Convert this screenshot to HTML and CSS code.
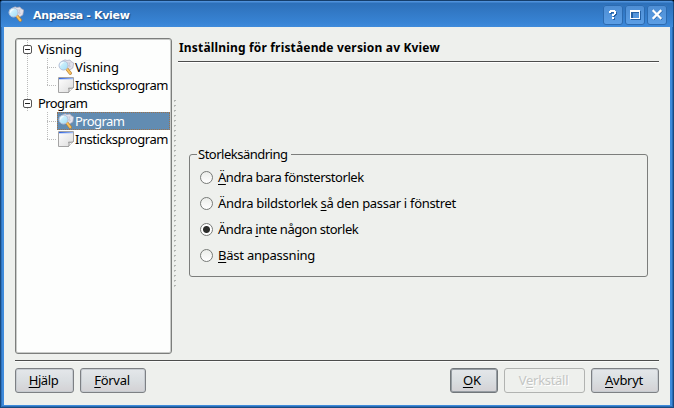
FILE: index.html
```html
<!DOCTYPE html>
<html lang="sv">
<head>
<meta charset="utf-8">
<title>Anpassa - Kview</title>
<link rel="stylesheet" href="styles.css">
</head>
<body>
<svg class="defs" width="0" height="0">
  <defs>
    <linearGradient id="lens" x1="0" y1="0" x2="1" y2="1"><stop offset="0" stop-color="#e4f8ff"/><stop offset="1" stop-color="#9cdcf6"/></linearGradient>
    <linearGradient id="bar" x1="0" y1="0" x2="1" y2="0"><stop offset="0" stop-color="#2f62e0"/><stop offset="1" stop-color="#9dbcf8"/></linearGradient>
    <linearGradient id="paper" x1="0" y1="0" x2="1" y2="1"><stop offset="0" stop-color="#ffffff"/><stop offset="1" stop-color="#dcdcdc"/></linearGradient>
  </defs>
  <symbol id="view" viewBox="0 0 16 16">
    <path d="M4 2.500L7 .8l2 .7 3-.5 1 1.500 2.700 1.500L14.800 9 11.500 11 7 9z" fill="#e2e2ec" stroke="#a8a8ba" stroke-width=".7"/>
    <path d="M9 3.500l3 1M10 6.500l3 1M12 3l-1 6" stroke="#c4c5d3" stroke-width=".7"/>
    <path d="M9 10l3.300 4.200" stroke="#b98239" stroke-width="3.200" stroke-linecap="round"/>
    <path d="M9 10l3.100 4.100" stroke="#f9c45e" stroke-width="2" stroke-linecap="round"/>
    <circle cx="5.500" cy="6.500" r="4.500" fill="url(#lens)" stroke="#b5bfd8"/>
    <path d="M2.500 6.500a3 3 0 0 1 3-3" stroke="#fff" fill="none"/>
  </symbol>
  <symbol id="page" viewBox="0 0 16 16">
    <path d="M.5.5h15v10l-5 5H.5z" fill="url(#paper)" stroke="#a4a4a4"/>
    <path d="M1 1h14v1.300H1z" fill="url(#bar)"/>
    <path d="M10.500 15.500c.8-1.500.7-3 .2-4.500 1.500.5 3.300.4 4.800-.5" fill="#f6f6f6" stroke="#858585" stroke-width=".9"/>
  </symbol>
</svg>
<div class="window">
  <header class="titlebar">
    <svg class="app-icon"><use href="#view"/></svg>
    <h1 class="title">Anpassa - Kview</h1>
    <div class="controls">
      <span class="control"><svg width="20" height="20" viewBox="0 0 20 20" shape-rendering="crispEdges"><path class="shade" d="M7 7h2v2H7zM8 6h5v2H8zM12 7h2v3h-2zM10 10h3v1h-3zM10 11h2v1h-2zM10 13h2v2h-2z"/><path class="glyph" d="M6 6h2v2H6zM7 5h5v2H7zM11 6h2v3h-2zM9 9h3v1H9zM9 10h2v1H9zM9 12h2v2H9z"/></svg></span>
      <span class="control"><svg width="20" height="20" viewBox="0 0 20 20" shape-rendering="crispEdges"><path class="shade" d="M6 6h10v9H6zM8 8v5h6V8z" fill-rule="evenodd"/><path class="glyph" d="M5 5h10v9H5zM6 7v6h8V7z" fill-rule="evenodd"/></svg></span>
      <span class="control"><svg width="20" height="20" viewBox="0 0 20 20"><path d="M7 6.500l7 7M14 6.500l-7 7" stroke="#2561a5" stroke-width="2.400" stroke-linecap="square"/><path d="M6.500 6l7 7M13.500 6l-7 7" stroke="#fff" stroke-width="2.300" stroke-linecap="square"/></svg></span>
    </div>
  </header>
  <main class="client">
    <div class="columns">
      <nav class="tree">
        <div class="row parent"><i class="toggle"></i><span class="visning">Visning</span></div>
        <div class="row child"><svg class="icon"><use href="#view"/></svg><span class="visning">Visning</span></div>
        <div class="row child last"><svg class="icon"><use href="#page"/></svg><span class="plugins">Insticksprogram</span></div>
        <div class="row parent"><i class="toggle"></i><span class="program">Program</span></div>
        <div class="row child selected"><svg class="icon"><use href="#view"/></svg><span class="program">Program</span></div>
        <div class="row child last"><svg class="icon"><use href="#page"/></svg><span class="plugins">Insticksprogram</span></div>
      </nav>
      <div class="splitter"></div>
      <section class="page">
        <h2 class="heading">Inställning för fristående version av Kview</h2>
        <div class="group">
          <div class="legend"><span>Storleksändring</span></div>
          <div class="options">
            <label class="option only-window"><i class="radio"></i><span><u>Ä</u>ndra bara fönsterstorlek</span></label>
            <label class="option fit-image"><i class="radio"></i><span>Ändra bildstorlek <u>s</u>å den passar i fönstret</span></label>
            <label class="option no-resize"><i class="radio checked"></i><span>Ändra <u>i</u>nte någon storlek</span></label>
            <label class="option best-fit"><i class="radio"></i><span><u>B</u>äst anpassning</span></label>
          </div>
        </div>
      </section>
    </div>
    <footer class="buttons">
      <button class="button help"><span><u>H</u>jälp</span></button>
      <button class="button defaults"><span><u>F</u>örval</span></button>
      <button class="button ok"><span><u>O</u>K</span></button>
      <button class="button apply" disabled><span>V<u>e</u>rkställ</span></button>
      <button class="button cancel"><span><u>A</u>vbryt</span></button>
    </footer>
  </main>
</div>
</body>
</html>
```
FILE: styles.css
```css
* { box-sizing: border-box; }
body { margin: 0; background: #000; font: 13px/18px "Noto Sans", sans-serif; color: #000; }
.defs { position: absolute; }
h1, h2 { margin: 0; }
u { text-decoration: underline; text-underline-offset: 2px; text-decoration-thickness: 1px; text-decoration-skip-ink: none; }

.window { width: 674px; height: 408px; display: flex; flex-direction: column; border: 1px solid #194a80; border-top-color: #153e6b; border-radius: 3px 3px 0 0; background: #3f8bdb; padding: 0 3px 2px; overflow: hidden; box-shadow: inset 1px 0 #2f74bf, inset -1px 0 #2a6cb5, inset 0 -1px #2a6cb5; }
.titlebar { height: 26px; flex: none; display: flex; align-items: center; margin: 0 -3px; padding: 0 6px 0 7px; background: linear-gradient(#4f92dc 0, #4f92dc 1px, #2d70b9 2px, #3884d5 22px, #3f8bdb 26px); }
.app-icon { width: 16px; height: 16px; flex: none; margin-bottom: 1px; }
.title { margin-left: 9px; font: bold 11px/18px "DejaVu Sans", sans-serif; letter-spacing: -0.33px; color: #fff; text-shadow: 1px 1px 1px #1b4b84; padding-top: 3px; white-space: nowrap; }
.controls { margin-left: auto; display: flex; gap: 2px; padding-top: 2px; }
.control { width: 20px; height: 20px; border-radius: 3px; background: linear-gradient(#4d8dd3, #5c9fe6); box-shadow: inset 0 0 0 1px #2c6bb1; }
.control svg { display: block; }
.glyph { fill: #fff; }
.shade { fill: #2561a5; }

.client { flex: 1; background: #eef0ed; padding: 11px; display: flex; flex-direction: column; }
.columns { height: 316px; display: flex; }
.tree { width: 157px; height: 316px; flex: none; border: 1px solid #7c7e7c; box-shadow: inset 0 0 0 1px #c9cbc9; border-radius: 3px; background: #fdfefd; padding: 1px; }
.row { height: 18px; display: flex; align-items: center; white-space: nowrap; }
.parent { padding: 0 0 0 6px; position: relative; }
.parent::before { content: ""; position: absolute; left: 10px; top: 0; width: 1px; height: 18px; background: repeating-linear-gradient(#bbb 0 1px, transparent 1px 2px); }
.toggle { width: 9px; height: 9px; border: 1px solid #555; border-radius: 2px; margin: 1px 6px 0 0; background: linear-gradient(#222, #222) center / 5px 1px no-repeat #fff; position: relative; }
.child { margin-left: 10px; padding-left: 30px; background: repeating-linear-gradient(#bbb 0 1px, transparent 1px 2px) 0 0 / 1px 18px no-repeat, repeating-linear-gradient(#bbb 0 1px, transparent 1px 2px) 20px 0 / 1px 18px no-repeat, repeating-linear-gradient(90deg, #bbb 0 1px, transparent 1px 2px) 20px 9px / 9px 1px no-repeat; }
.last { background-size: 1px 18px, 1px 10px, 9px 1px; }
.selected ~ .child, .selected { background-position: -9px 0, 20px 0, 20px 9px; }
.icon { width: 16px; height: 16px; flex: none; margin: 0 1px; }
.visning { letter-spacing: -0.15px; }
.program { letter-spacing: -0.6px; }
.plugins { letter-spacing: -0.44px; }
.selected { color: #fff; position: relative; z-index: 0; }
.selected::before { content: ""; position: absolute; z-index: -1; left: 30px; top: 0; right: 0; bottom: 0; background: #628cb2; border: 1px dotted #9d734d; }
.splitter { width: 6px; flex: none; height: 189px; margin-top: 62px; background: conic-gradient(from 0deg at 2px 1px, transparent 75%, #b0b3b0 0) 2px 0 / 4px 5px repeat-y, conic-gradient(from 0deg at 1px 2px, transparent 75%, #c3c6c3 0) 2px 0 / 4px 5px repeat-y; }
.page { flex: 1; }
.heading { height: 24px; border-bottom: 1px solid #4c4d4c; box-shadow: 0 1px #fff; font: bold 12px/18px "Noto Sans", sans-serif; letter-spacing: 0.17px; padding: 1px 0 0 1px; white-space: nowrap; }
.group { width: 459px; height: 123px; margin: 92px 0 0 11px; border: 1px solid #7c7e7c; border-radius: 3px; }
.legend { height: 18px; margin: -10px 0 0 7px; letter-spacing: -0.5px; }
.legend span { display: inline-block; background: #eef0ed; padding: 0 3px 0 1px; }
.options { display: grid; grid-auto-rows: 26px; padding: 1px 0 0 10px; }
.option { display: flex; align-items: center; white-space: nowrap; }
.only-window { letter-spacing: -0.45px; }
.fit-image { letter-spacing: -0.3px; }
.no-resize { letter-spacing: -0.46px; }
.best-fit { letter-spacing: -0.23px; }
.radio { width: 13px; height: 13px; border: 1px solid #777a77; border-radius: 50%; margin-right: 5px; background: linear-gradient(#ebedea, #fff); }
.checked { background: radial-gradient(circle, #2c2e2c 0 3px, transparent 4px), #fff; }

.buttons { margin-top: 6px; padding-top: 7px; border-top: 1px solid #4c4d4c; box-shadow: inset 0 1px #fafbfa; display: flex; }
.button { height: 25px; font: inherit; line-height: 18px; padding: 0 2px 2px 0; border: 1px solid #7d8084; border-radius: 3px; background: linear-gradient(#e4e7ea, #dadee1 50%, #d3d1d4); box-shadow: inset 0 0 0 1px #c6cbd0; color: #000; text-align: center; letter-spacing: -0.3px; }
.help { width: 59px; margin-right: 6px; letter-spacing: -0.4px; }
.defaults { width: 66px; margin-right: auto; }
.ok { width: 48px; margin-right: 6px; padding-right: 4px; border-color: #72777b; box-shadow: inset 0 0 0 1px #969da3; letter-spacing: 0; }
.apply { width: 81px; margin-right: 6px; background: #eef0ed; border-color: #b1b3b1; box-shadow: none; color: #c4c6c4; text-shadow: 1px 1px #fff; }
.cancel { width: 68px; }
```
